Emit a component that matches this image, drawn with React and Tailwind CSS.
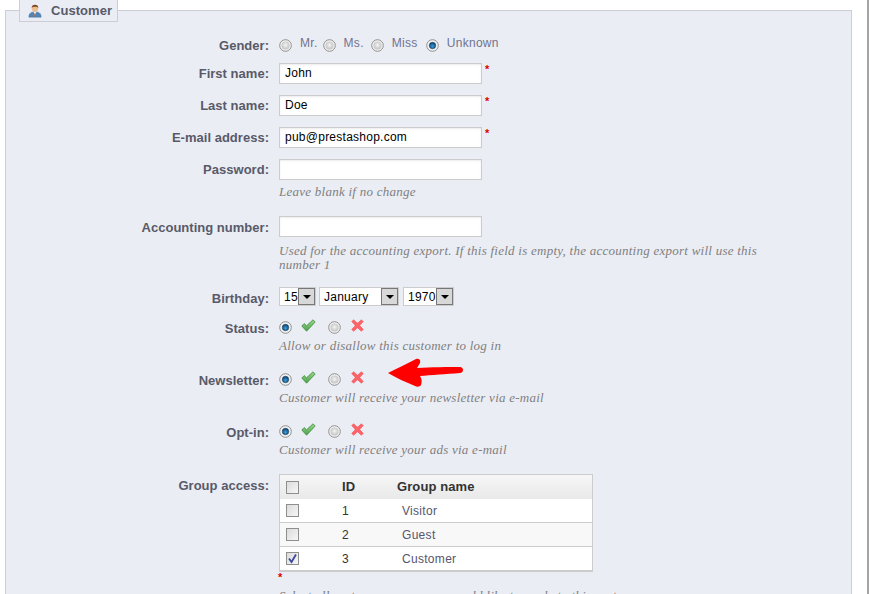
import React from "react";

const SANS = "font-['Liberation_Sans',Arial,sans-serif]";

const Radio = ({ checked }) => (
  <svg width="13" height="13" viewBox="0 0 13 13" className="shrink-0">
    <defs>
      <radialGradient id="radioOff" cx="50%" cy="45%" r="60%">
        <stop offset="0%" stopColor="#f4f4f4" />
        <stop offset="100%" stopColor="#bdbdbd" />
      </radialGradient>
      <radialGradient id="radioDot" cx="50%" cy="62%" r="60%">
        <stop offset="0%" stopColor="#3aa0dc" />
        <stop offset="100%" stopColor="#0b3f6e" />
      </radialGradient>
    </defs>
    <circle cx="6.5" cy="6.5" r="5.8" fill="#f2f2f2" stroke="#8f8f8f" strokeWidth="1" />
    {checked ? (
      <circle cx="6.5" cy="6.5" r="3.2" fill="url(#radioDot)" stroke="#173a5c" strokeWidth="0.6" />
    ) : (
      <circle cx="6.5" cy="6.5" r="4" fill="url(#radioOff)" />
    )}
  </svg>
);

const CheckIcon = () => (
  <svg width="15" height="13" viewBox="0 0 15 13" className="shrink-0">
    <defs>
      <linearGradient id="checkFill" x1="0" y1="0" x2="0" y2="1">
        <stop offset="0%" stopColor="#9ad68c" />
        <stop offset="100%" stopColor="#4ba34a" />
      </linearGradient>
    </defs>
    <path
      d="M0.8 7 L3.2 4.6 L5.6 6.8 L12 0.8 L14.2 3 L5.6 12.2 Z"
      fill="url(#checkFill)"
      stroke="#3f8a3f"
      strokeWidth="0.8"
      strokeLinejoin="round"
    />
  </svg>
);

const CrossIcon = () => (
  <svg width="13" height="13" viewBox="0 0 14 14" className="shrink-0">
    <path
      d="M2.8 0.8 L7 4.6 L11.2 0.8 L13.2 2.8 L9.4 7 L13.2 11.2 L11.2 13.2 L7 9.4 L2.8 13.2 L0.8 11.2 L4.6 7 L0.8 2.8 Z"
      fill="#fb6468"
      stroke="#f4494f"
      strokeWidth="0.6"
      strokeLinejoin="round"
    />
  </svg>
);

const CustomerIcon = () => (
  <svg width="14" height="14" viewBox="0 0 16 16" className="shrink-0">
    <path d="M1 15 C1 10.5 3.5 9 8 9 C12.5 9 15 10.5 15 15 Z" fill="#4f86b8" stroke="#3c6d9c" strokeWidth="0.5" />
    <path d="M6.4 9 L8 12.5 L9.6 9 Z" fill="#f3f3f3" />
    <rect x="7.4" y="10.5" width="1.2" height="4" fill="#d9662b" />
    <circle cx="8" cy="5" r="3.6" fill="#eebd8d" />
    <path d="M4.2 5 C4 1.8 6 0.8 8 0.8 C10 0.8 12 1.8 11.8 5 C11 3.6 9.8 3.2 8 3.3 C6.2 3.2 5 3.6 4.2 5 Z" fill="#7a4420" />
  </svg>
);

const Req = () => <span className="text-[#dd0000] text-[11px] leading-none ml-[3px] mt-[-8px] font-bold">*</span>;

const Row = ({ label, className = "", labelClass = "", children }) => (
  <div className={`flex ${className}`}>
    <label className={`w-[269px] shrink-0 text-right text-[13px] font-bold tracking-[0.02px] text-[#585a69] leading-[15px] ${labelClass}`}>
      {label}
    </label>
    <div className="ml-[10px] flex-1 min-w-0">{children}</div>
  </div>
);

const TextInput = ({ value = "" }) => (
  <div className="w-[203px] h-[21px] bg-white border border-[#ccc] pl-[5px] text-[12px] tracking-[0.25px] leading-[19px] text-black shadow-[inset_0_1px_2px_rgba(0,0,0,0.08)]">
    {value}
  </div>
);

const Hint = ({ children, className = "" }) => (
  <p className={`font-['Liberation_Serif',Georgia,serif] italic text-[13px] tracking-[0.25px] leading-[14px] text-[#7f7f7f] ${className}`}>
    {children}
  </p>
);

const Select = ({ value, width }) => (
  <div className={`flex h-[19px] bg-white border border-[#ccc] pl-[4px] text-[12px] tracking-[0.25px] leading-[18px] text-black ${width}`}>
    <span className="flex-1 overflow-hidden">{value}</span>
    <span className="w-[17px] h-[17px] bg-[#d8d8d8] border border-[#777] flex items-center justify-center shrink-0">
      <span className="border-x-[4px] border-x-transparent border-t-[4px] border-t-black" />
    </span>
  </div>
);

const Toggle = () => (
  <div className="flex items-center h-[14px]">
    <Radio checked />
    <span className="ml-[9px] mb-[4px]">
      <CheckIcon />
    </span>
    <span className="ml-[12px]">
      <Radio />
    </span>
    <span className="ml-[10px] mb-[4px]">
      <CrossIcon />
    </span>
  </div>
);

const Box = ({ checked }) => (
  <span className="w-[13px] h-[13px] border border-[#8e8e8e] bg-gradient-to-br from-[#dcdcdc] to-[#f6f6f6] flex items-center justify-center shrink-0">
    {checked && (
      <svg width="11" height="11" viewBox="0 0 11 11">
        <path d="M2 5.5 L4.5 9 L9 1.5" fill="none" stroke="#3c4a9c" strokeWidth="1.8" />
      </svg>
    )}
  </span>
);

const GROUPS = [
  { id: 1, name: "Visitor", row: "bg-white h-[23px]" },
  { id: 2, name: "Guest", row: "bg-[#f8f8f8] h-[24px] border-t border-[#ccc]" },
  { id: 3, name: "Customer", row: "bg-white h-[24px] border-t border-[#ccc]", checked: true },
];

const GroupTable = () => (
  <div className="w-[314px] border border-[#ccc] border-b-2">
    <div className="flex items-center h-[24px] bg-gradient-to-b from-[#f6f6f6] to-[#e9e9e9] text-[#333] text-[13px] tracking-[0.1px] font-bold">
      <span className="ml-[6px]">
        <Box />
      </span>
      <span className="ml-[43px] w-[55px]">ID</span>
      <span>Group name</span>
    </div>
    {GROUPS.map((g) => (
      <div key={g.id} className={`flex items-center ${g.row} text-[12px] tracking-[0.3px]`}>
        <span className="ml-[6px]">
          <Box checked={g.checked} />
        </span>
        <span className="ml-[43px] w-[60px] text-[#333]">{g.id}</span>
        <span className="text-[#56566e]">{g.name}</span>
      </div>
    ))}
  </div>
);

export default function App() {
  return (
    <div className={`relative h-[594px] w-[869px] overflow-hidden bg-white border-r-2 border-[#a4a4a4] ${SANS}`}>
      <div className="h-[10px]" />
      <div className="relative w-[847px] h-[600px] ml-[5px] bg-[#ebedf4] border border-[#ccced7]">
        {/* legend sits over the fieldset border */}
        <div className="absolute left-[13px] top-[-12px] w-[99px] h-[23px] bg-[#ebedf4] border border-[#ccced7] border-t-0 flex items-center pl-[8px] pt-[2px] text-[13px] font-bold tracking-[0.05px] text-[#585a69]">
          <CustomerIcon />
          <span className="ml-[9px]">Customer</span>
        </div>

        <div className="-ml-[6px] pt-[27px]">
          <Row label="Gender:" className="h-[25px]">
            <div className="flex items-center text-[12px] tracking-[0.3px] text-[#6f7390] h-[14px]">
              <Radio />
              <span className="ml-[8px] mt-[-4px]">Mr.</span>
              <span className="ml-[5px]"><Radio /></span>
              <span className="ml-[8px] mt-[-4px]">Ms.</span>
              <span className="ml-[7px]"><Radio /></span>
              <span className="ml-[8px] mt-[-4px]">Miss</span>
              <span className="ml-[8px]"><Radio checked /></span>
              <span className="ml-[8px] mt-[-4px]">Unknown</span>
            </div>
          </Row>

          <Row label="First name:" className="h-[32px]" labelClass="pt-[3px]">
            <div className="flex items-start">
              <TextInput value="John" />
              <span className="pt-[9px] flex"><Req /></span>
            </div>
          </Row>
          <Row label="Last name:" className="h-[32px]" labelClass="pt-[3px]">
            <div className="flex items-start">
              <TextInput value="Doe" />
              <span className="pt-[9px] flex"><Req /></span>
            </div>
          </Row>
          <Row label="E-mail address:" className="h-[32px]" labelClass="pt-[3px]">
            <div className="flex items-start">
              <TextInput value="pub@prestashop.com" />
              <span className="pt-[9px] flex"><Req /></span>
            </div>
          </Row>
          <Row label="Password:" className="h-[57px]" labelClass="pt-[3px]">
            <TextInput />
            <Hint className="mt-[5px]">Leave blank if no change</Hint>
          </Row>
          <Row label="Accounting number:" className="h-[71px]" labelClass="pt-[4px]">
            <TextInput />
            <Hint className="mt-[7px] w-[490px]">
              Used for the accounting export. If this field is empty, the accounting export will use this number 1
            </Hint>
          </Row>
          <Row label="Birthday:" className="h-[33px]" labelClass="pt-[4px]">
            <div className="flex gap-[3px]">
              <Select value="15" width="w-[37px]" />
              <Select value="January" width="w-[80px]" />
              <Select value="1970" width="w-[51px] ml-[1px]" />
            </div>
          </Row>
          <Row label="Status:" className="h-[52px]" labelClass="pt-[1px]">
            <Toggle />
            <Hint className="mt-[5px]">Allow or disallow this customer to log in</Hint>
          </Row>
          <Row label="Newsletter:" className="h-[52px]" labelClass="pt-[1px]">
            <Toggle />
            <Hint className="mt-[5px]">Customer will receive your newsletter via e-mail</Hint>
          </Row>
          <Row label="Opt-in:" className="h-[50px]" labelClass="pt-[1px]">
            <Toggle />
            <Hint className="mt-[5px]">Customer will receive your ads via e-mail</Hint>
          </Row>
          <Row label="Group access:" labelClass="pt-[4px]">
            <GroupTable />
            <div className="h-[12px] flex pt-[8px] -ml-[4px]"><Req /></div>
            <Hint className="mt-[5px]">Select all customer groups you would like to apply to this customer</Hint>
          </Row>
        </div>
      </div>

      {/* annotation drawn on top of the screenshot */}
      <svg width="80" height="30" viewBox="0 0 80 30" className="absolute left-[386px] top-[358px]">
        <path
          d="M2 15 C12 10 22 5 30 1 C33 0 35 2 34 5 L31 10 C45 9 62 9 74 9 C78 9 78 15 74 15 C60 16 45 17 34 18 C36 21 36 24 35 27 C34 29 31 29 29 28 C20 24 10 20 2 15 Z"
          fill="#fe0000"
        />
      </svg>
    </div>
  );
}
